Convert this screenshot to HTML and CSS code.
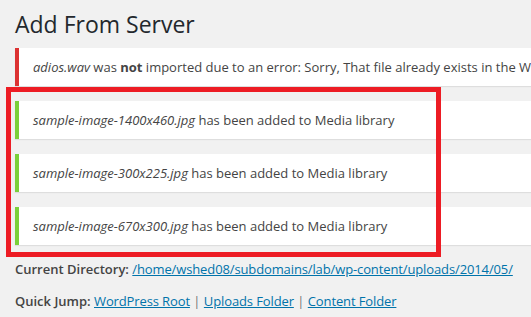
FILE: index.html
```html
<!DOCTYPE html>
<html>
<head>
<meta charset="utf-8">
<link rel="stylesheet" href="styles.css">
</head>
<body>
<div class="wrap">
  <h1 class="title">Add From Server</h1>
  <div class="notice notice-error"><p><em>adios.wav</em> was <strong>not</strong> imported due to an error: Sorry, That file already exists in the WordPress Media Library.</p></div>
  <div class="group">
    <div class="notice notice-success"><p><em>sample-image-1400x460.jpg</em> has been added to Media library</p></div>
    <div class="notice notice-success"><p><em>sample-image-300x225.jpg</em> has been added to Media library</p></div>
    <div class="notice notice-success"><p><em>sample-image-670x300.jpg</em> has been added to Media library</p></div>
    <div class="highlight"></div>
  </div>
  <p class="info"><strong>Current Directory:</strong> <a href="#">/home/wshed08/subdomains/lab/wp-content/uploads/2014/05/</a></p>
  <p class="info"><strong>Quick Jump:</strong> <a href="#">WordPress Root</a> <span class="sep">|</span> <a href="#">Uploads Folder</a> <span class="sep">|</span> <a href="#">Content Folder</a></p>
</div>
</body>
</html>
```
FILE: styles.css
```css
html, body {
  margin: 0;
  padding: 0;
  background: #f1f1f1;
  overflow: hidden;
}
body {
  font-family: "Open Sans", "Liberation Sans", sans-serif;
  color: #444;
  font-size: 13px;
}
.wrap {
  padding-left: 15px;
  width: 516px;
}
.title {
  font-size: 23px;
  font-weight: 400;
  line-height: 30px;
  color: #23282d;
  margin: 9px 0 9px;
}
.group {
  position: relative;
}
.notice {
  background: #fff;
  border-left: 4px solid #7ad03a;
  box-shadow: 0 1px 1px rgba(0,0,0,0.08);
  padding: 1px 12px 1px 14px;
  height: 36px;
  margin-bottom: 15px;
  white-space: nowrap;
  overflow: hidden;
}
.notice-error {
  border-left-color: #dc3232;
}
.notice p {
  margin: 8px 0;
  line-height: 20px;
}
.notice strong {
  font-weight: 700;
}
.highlight {
  position: absolute;
  left: -9px;
  top: -14px;
  width: 425px;
  height: 160px;
  border: 5px solid #ed1c24;
  pointer-events: none;
}
.info {
  margin: 0 0 12px;
  line-height: 20px;
  white-space: nowrap;
}
.group + .info {
  margin-top: -1px;
}
.info strong {
  font-weight: 600;
}
.info a {
  color: #0073aa;
  text-decoration: underline;
  letter-spacing: -0.12px;
}
.sep {
  color: #777;
}
```
